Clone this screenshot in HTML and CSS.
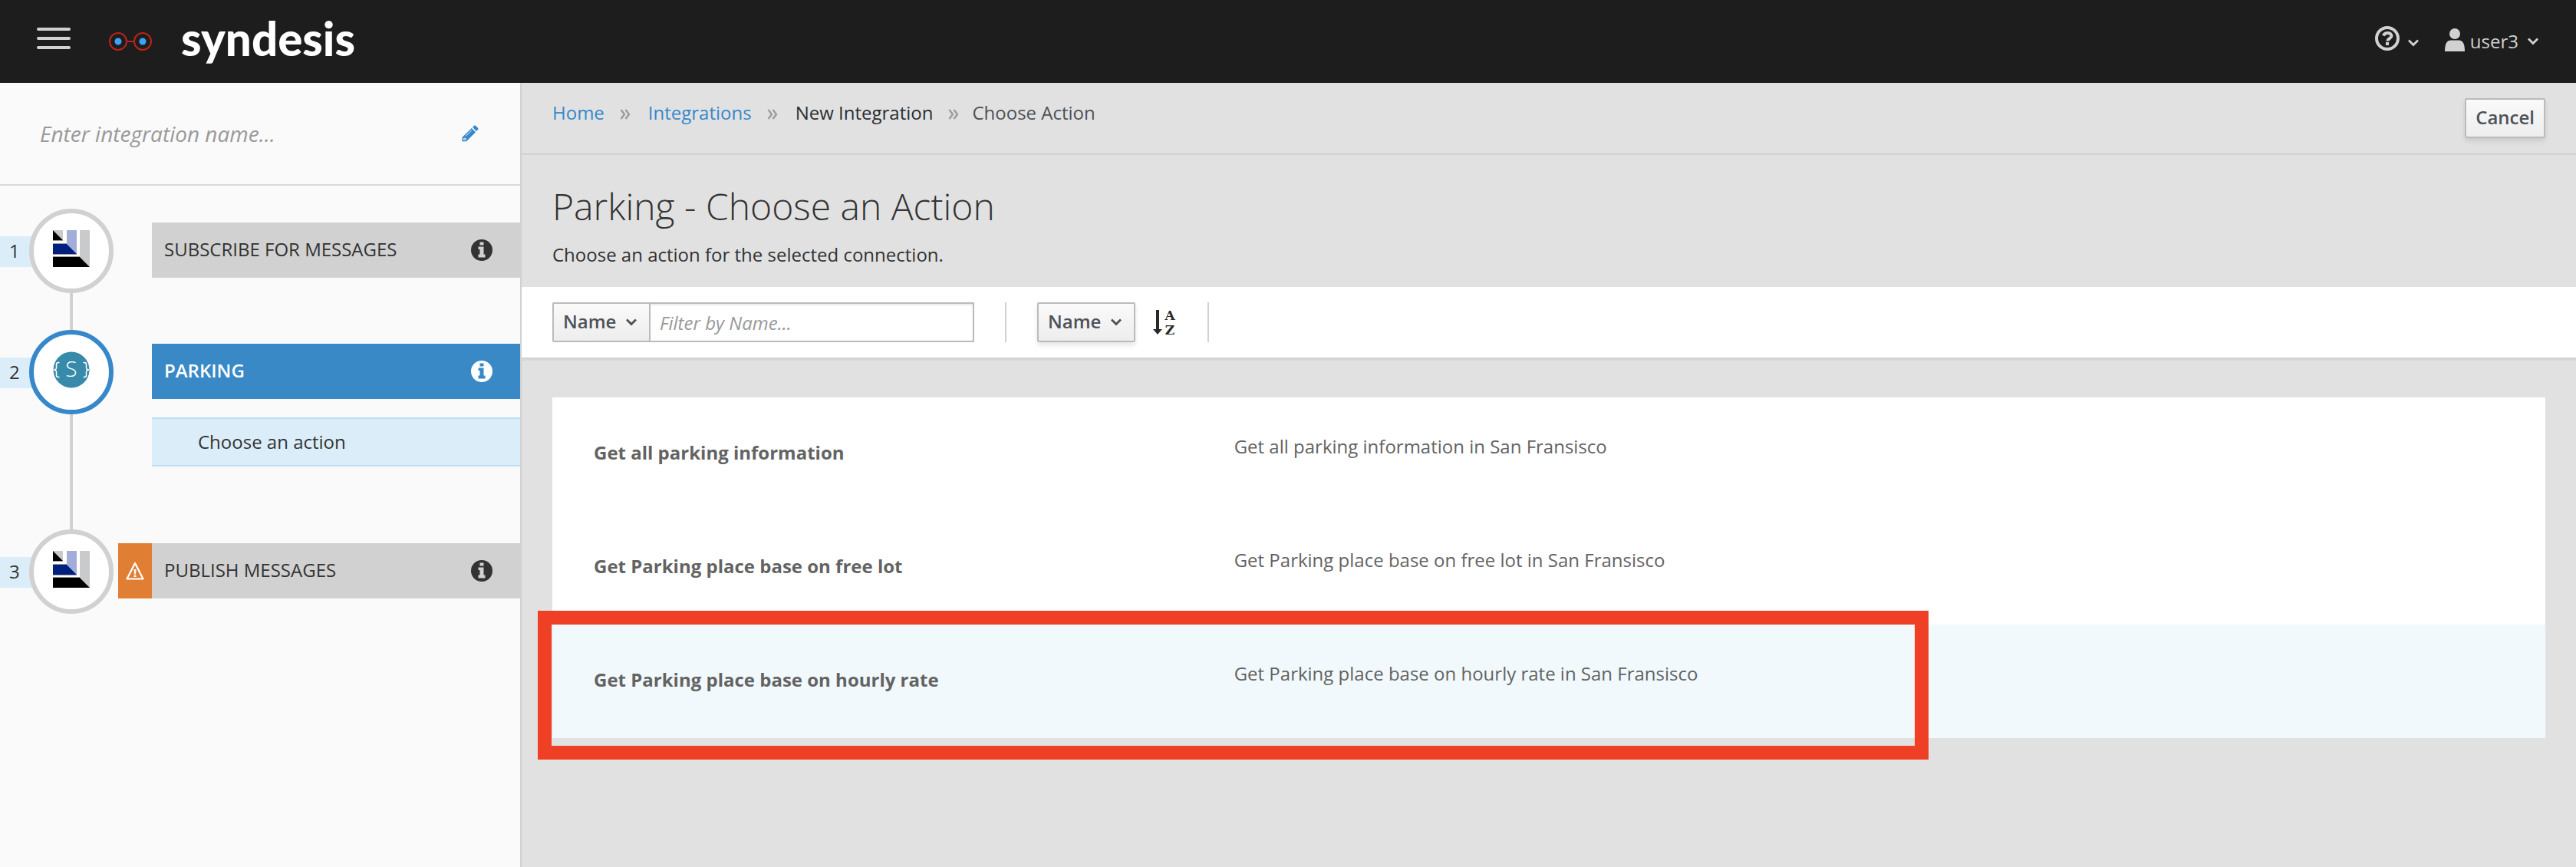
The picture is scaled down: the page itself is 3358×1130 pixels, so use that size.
FILE: index.html
```html
<!DOCTYPE html>
<html lang="en">
<head>
<meta charset="utf-8">
<meta name="viewport" content="width=device-width, initial-scale=1">
<title>Syndesis - New Integration</title>
<link rel="stylesheet" href="styles.css">
</head>
<body>
<svg class="sprite" aria-hidden="true">
  <symbol id="chevron" viewBox="0 0 14 10"><path d="M1 1.500 7 7.500 13 1.500" fill="none" stroke="currentColor" stroke-width="2.800"/></symbol>
  <symbol id="info" viewBox="0 0 28 28">
    <path fill="currentColor" fill-rule="evenodd" d="M14 0a14 14 0 1 1 0 28a14 14 0 0 1 0-28ZM11.500 3.500V7.500H16.500V3.500ZM9.500 9.500V13H11.500V19.500H9.500V23.500H18.500V19.500H16.500V9.500Z"/>
  </symbol>
  <symbol id="double-angle" viewBox="0 0 14 14"><path d="M1.500 1 6 7 1.500 13M7.500 1 12 7 7.500 13" fill="none" stroke="currentColor" stroke-width="2.400"/></symbol>
  <symbol id="amq" viewBox="0 0 48 48">
    <path fill="#c9cacc" d="M0 0H13V13ZM35 0H48V48L35 35Z"/>
    <path fill="#a3aed8" d="M18 0H31V31L18 18Z"/>
    <path fill="#000" d="M0 0 13 13H0ZM0 35H35L48 48H0Z"/>
    <path fill="#00207f" d="M0 18H18L31 31H0Z"/>
    <path fill="none" stroke="#999" d="M0 13.500H13M0 17.500H18M0 31.500H31M0 34.500H35"/>
  </symbol>
</svg>

<header class="topbar">
  <button class="icon-button menu-toggle" type="button" aria-label="Toggle navigation"><span></span><span></span><span></span></button>
  <a class="brand" href="#">
    <svg width="56" height="24" viewBox="0 0 56 24" aria-hidden="true">
      <g fill="none" stroke="#b92419" stroke-width="2"><circle cx="12" cy="12" r="11"/><circle cx="44" cy="12" r="11"/><path d="M23 12H33"/></g>
      <circle cx="12" cy="12" r="4.500" fill="#3fa2f2"/><circle cx="44" cy="12" r="4.500" fill="#3fa2f2"/>
    </svg>
    <span class="brand-name">syndesis</span>
  </a>
  <nav class="topbar-tools" aria-label="Utilities">
    <button class="icon-button help" type="button" aria-label="Help">
      <svg width="32" height="32" viewBox="0 0 32 32" aria-hidden="true">
        <circle cx="16" cy="16" r="14" fill="none" stroke="currentColor" stroke-width="4"/>
        <path d="M11 12.500C12 9.500 14 9 16.500 9C19.500 9 21.500 10.500 21.500 13C21.500 16 16.500 16 16.500 19.500" fill="none" stroke="currentColor" stroke-width="4"/>
        <path d="M14 21H18V25H14Z" fill="currentColor"/>
      </svg>
      <svg class="chevron" aria-hidden="true"><use href="#chevron"/></svg>
    </button>
    <button class="icon-button user" type="button">
      <svg width="26" height="32" viewBox="0 0 26 32" aria-hidden="true"><circle cx="13" cy="8" r="7" fill="currentColor"/><path d="M0 31C0 21 2.500 16.500 8 16.500H18C23.500 16.500 26 21 26 31Z" fill="currentColor"/></svg>
      <span>user3</span>
      <svg class="chevron" aria-hidden="true"><use href="#chevron"/></svg>
    </button>
  </nav>
</header>

<div class="layout">
  <aside class="sidebar">
    <div class="integration-name">
      <input type="text" aria-label="Integration name" placeholder="Enter integration name...">
      <button class="icon-button edit" type="button" aria-label="Edit name">
        <svg width="22" height="22" viewBox="0 0 22 22" aria-hidden="true">
          <path fill="currentColor" d="M14 2.800 16 .8Q17 0 18 .8L21 3.800Q22 5 21 6L19 8ZM12.800 4 18 9.200 6 21.200H.5V16Z"/>
          <path fill="none" stroke="#fafafa" stroke-width="1" d="M5 14.500 13 6.500M2.500 17.500V19.200H5.200L4.800 17.200Z"/>
        </svg>
      </button>
    </div>
    <ol class="steps">
      <li class="step">
        <span class="step-number">1</span>
        <div class="step-rail"><div class="step-icon"><svg width="48" height="48" aria-hidden="true"><use href="#amq"/></svg></div></div>
        <div class="step-body">
          <div class="step-bar"><span class="step-title">SUBSCRIBE FOR MESSAGES</span><button class="icon-button" type="button" aria-label="Step 1 details"><svg width="28" height="28" aria-hidden="true"><use href="#info"/></svg></button></div>
        </div>
      </li>
      <li class="step active">
        <span class="step-number">2</span>
        <div class="step-rail"><div class="step-icon">
          <svg width="48" height="48" viewBox="0 0 48 48" aria-hidden="true"><circle cx="24" cy="24" r="23.500" fill="#378aaa"/><text class="swagger" x="24" y="33" text-anchor="middle">S</text><path fill="none" stroke="#fff" stroke-width="1.500" d="M8.500 14.500H7Q4.500 14.500 4.500 17V21Q4.500 24 1 24Q4.500 24 4.500 27V31Q4.500 33.500 7 33.500H8.500M39.500 14.500H41Q43.500 14.500 43.500 17V21Q43.500 24 47 24Q43.500 24 43.500 27V31Q43.500 33.500 41 33.500H39.500"/></svg>
        </div></div>
        <div class="step-body">
          <div class="step-bar"><span class="step-title">PARKING</span><button class="icon-button" type="button" aria-label="Step 2 details"><svg width="28" height="28" aria-hidden="true"><use href="#info"/></svg></button></div>
          <div class="substep">Choose an action</div>
        </div>
      </li>
      <li class="step invalid">
        <span class="step-number">3</span>
        <div class="step-rail"><div class="step-icon"><svg width="48" height="48" aria-hidden="true"><use href="#amq"/></svg></div></div>
        <div class="step-body">
          <span class="step-warning"><svg width="24" height="24" viewBox="0 0 24 24" aria-hidden="true"><path d="M12 2 22.500 22.500H1.500Z" fill="none" stroke="#fff" stroke-width="2.200" stroke-linejoin="round"/><path d="M10.500 10H13.500L13 16.500H11ZM10.500 17.500H13.500V20H10.500Z" fill="#fff"/></svg></span>
          <div class="step-bar"><span class="step-title">PUBLISH MESSAGES</span><button class="icon-button" type="button" aria-label="Step 3 details"><svg width="28" height="28" aria-hidden="true"><use href="#info"/></svg></button></div>
        </div>
      </li>
    </ol>
  </aside>

  <main class="main">
    <div class="page-bar">
      <nav aria-label="Breadcrumb">
        <ol class="breadcrumb">
          <li><a href="#">Home</a></li>
          <li><svg class="separator" aria-hidden="true"><use href="#double-angle"/></svg><a href="#">Integrations</a></li>
          <li><svg class="separator" aria-hidden="true"><use href="#double-angle"/></svg><span class="parent">New Integration</span></li>
          <li><svg class="separator" aria-hidden="true"><use href="#double-angle"/></svg><span>Choose Action</span></li>
        </ol>
      </nav>
      <button class="button" type="button">Cancel</button>
    </div>
    <div class="page-head">
      <h1>Parking - Choose an Action</h1>
      <p>Choose an action for the selected connection.</p>
    </div>
    <form class="toolbar">
      <div class="filter">
        <div class="select"><select aria-label="Filter field"><option>Name</option></select><svg class="chevron" aria-hidden="true"><use href="#chevron"/></svg></div>
        <input type="text" aria-label="Filter by Name" placeholder="Filter by Name...">
      </div>
      <div class="sort">
        <div class="select raised"><select aria-label="Sort field"><option>Name</option></select><svg class="chevron" aria-hidden="true"><use href="#chevron"/></svg></div>
        <button class="icon-button" type="button" aria-label="Sort ascending">
          <svg class="sort-icon" width="34" height="40" viewBox="0 0 34 40" aria-hidden="true"><path fill="currentColor" d="M5 4H9V29H13L7 36 1 29H5Z"/><text class="sort-letter" x="23" y="17" text-anchor="middle">A</text><text class="sort-letter" x="23" y="36" text-anchor="middle">Z</text></svg>
        </button>
      </div>
    </form>
    <ul class="actions">
      <li class="action"><strong>Get all parking information</strong><span>Get all parking information in San Fransisco</span></li>
      <li class="action"><strong>Get Parking place base on free lot</strong><span>Get Parking place base on free lot in San Fransisco</span></li>
      <li class="action selected"><strong>Get Parking place base on hourly rate</strong><span>Get Parking place base on hourly rate in San Fransisco</span></li>
    </ul>
  </main>
</div>
</body>
</html>
```

FILE: styles.css
```css
*,
*::before,
*::after {
  box-sizing: border-box;
}

body {
  margin: 0;
  min-height: 100vh;
  display: flex;
  flex-direction: column;
  background: #e1e1e1;
  color: #333;
  font: 24px/40px "Open Sans", "Noto Sans", sans-serif;
}

svg {
  display: block;
  flex: none;
}

ol,
ul,
h1,
p {
  margin: 0;
  padding: 0;
  list-style: none;
}

a {
  color: #3688cb;
  text-decoration: none;
}

button,
input,
select {
  font: inherit;
  color: inherit;
  margin: 0;
}

input::placeholder {
  color: #999;
  font-style: italic;
  opacity: 1;
}

.sprite {
  display: none;
}

.chevron {
  width: 14px;
  height: 10px;
}

.icon-button {
  display: flex;
  align-items: center;
  padding: 0;
  border: 0;
  background: none;
}

/* Top bar */
.topbar {
  display: flex;
  align-items: center;
  height: 108px;
  padding: 0 49px 0 48px;
  background: #1d1d1d;
  color: #d1d1d1;
}

.menu-toggle {
  flex-direction: column;
  gap: 8px;
  width: 44px;
  margin: 0 50px 8px 0;
}

.menu-toggle span {
  width: 44px;
  height: 4px;
  border-radius: 2px;
  background: #d1d1d1;
}

.brand {
  display: flex;
  align-items: center;
  gap: 38px;
}

.brand-name {
  color: #fff;
  font: 900 60px/60px Lato, sans-serif;
  padding-bottom: 8px;
}

.topbar-tools {
  display: flex;
  align-items: center;
  gap: 34px;
  margin-left: auto;
}

.help {
  gap: 11px;
  padding-bottom: 8px;
}

.help .chevron {
  margin-top: 12px;
}

.user svg:first-child {
  margin-bottom: 4px;
}

.user span {
  margin: 0 12px 0 7px;
}

/* Layout */
.layout {
  display: flex;
  flex: 1;
}

.sidebar {
  flex: none;
  width: 680px;
  border-right: 2px solid #d1d1d1;
  background: #fafafa;
}

.main {
  flex: 1;
  min-width: 0;
}

/* Sidebar */
.integration-name {
  display: flex;
  align-items: center;
  height: 134px;
  padding: 0 54px 0 52px;
  border-bottom: 2px solid #d9d9d9;
}

.integration-name input {
  flex: 1;
  min-width: 0;
  padding: 0;
  border: 0;
  background: none;
  font-size: 28px;
}

.edit {
  color: #3688cb;
}

.steps {
  padding-top: 30px;
}

.step {
  display: flex;
}

.step-number {
  width: 50px;
  height: 40px;
  margin: 36px -12px 0 0;
  padding-left: 12px;
  background: #daedf8;
  line-height: 38px;
}

.step-rail {
  position: relative;
  display: flex;
  flex-direction: column;
  align-items: center;
  width: 110px;
}

.step-rail::after {
  content: "";
  flex: 1;
  width: 4px;
  min-height: 48px;
  background: #d1d1d1;
}

.step:last-child .step-rail::after {
  display: none;
}

.step-icon {
  display: flex;
  align-items: center;
  justify-content: center;
  width: 110px;
  height: 110px;
  padding-bottom: 6px;
  border: 6px solid #d1d1d1;
  border-radius: 50%;
  background: #fff;
}

.active .step-icon {
  border-color: #3688cb;
}

.swagger {
  fill: #fff;
  font-size: 28px;
  font-weight: 300;
}

.step-body {
  flex: 1;
  padding: 18px 0 0 50px;
}

.invalid .step-body {
  display: flex;
  padding-left: 6px;
}

.step-warning {
  display: flex;
  align-items: center;
  justify-content: center;
  width: 44px;
  height: 72px;
  background: #e07f33;
}

.step-bar {
  display: flex;
  flex: 1;
  align-items: center;
  justify-content: space-between;
  height: 72px;
  padding: 0 36px 0 16px;
  background: #d1d1d1;
}

.step-title {
  padding-bottom: 2px;
}

.active .step-bar {
  background: #3989c7;
  color: #fff;
  font-weight: 600;
}

.substep {
  margin: 24px 0 82px;
  padding: 10px 60px;
  border: solid #bbdff2;
  border-width: 2px 0;
  background: #daedf8;
}

/* Page header */
.page-bar {
  display: flex;
  align-items: flex-start;
  justify-content: space-between;
  padding: 20px 40px;
  border-bottom: 2px solid #d1d1d1;
}

.breadcrumb {
  display: flex;
  gap: 20px;
  color: #4d5258;
}

.breadcrumb li {
  display: flex;
  align-items: center;
  gap: 23px;
  line-height: 38px;
}

.breadcrumb li:last-child {
  gap: 17px;
}

.breadcrumb .parent {
  color: #292e34;
}

.separator {
  width: 14px;
  height: 14px;
  margin-top: 4px;
  color: #9c9c9c;
}

.button,
.select select {
  height: 52px;
  border: 2px solid #bbb;
  border-radius: 2px;
  background: linear-gradient(#fafafa, #ededed);
  color: #4d5258;
  font-weight: 600;
}

.button {
  padding: 0 12px 2px;
  box-shadow: 0 4px 6px rgba(3, 3, 3, 0.1);
}

.page-head {
  padding: 40px 40px 22px;
}

.page-head h1 {
  margin-bottom: 16px;
  font-size: 48px;
  font-weight: 300;
  line-height: 54px;
}

/* Toolbar */
.toolbar {
  display: flex;
  padding: 20px 40px;
  border-bottom: 2px solid #d1d1d1;
  background: #fff;
  box-shadow: 0 2px 0 #d7d7d7;
}

.filter {
  display: flex;
  width: 550px;
}

.filter input {
  flex: 1;
  min-width: 0;
  height: 52px;
  margin-left: -2px;
  padding: 0 12px;
  border: 2px solid #bbb;
  background: #fff;
  box-shadow: inset 0 2px 2px rgba(3, 3, 3, 0.08);
}

.select {
  display: grid;
  align-items: center;
  width: 128px;
}

.select > * {
  grid-area: 1 / 1;
}

.select select {
  width: 100%;
  padding: 0 0 2px 12px;
  appearance: none;
}

.select .chevron {
  justify-self: end;
  margin-right: 18px;
  color: #4d5258;
  pointer-events: none;
}

.raised select {
  box-shadow: 0 4px 6px rgba(3, 3, 3, 0.1);
}

.sort {
  display: flex;
  gap: 22px;
  margin-left: 40px;
  padding: 0 38px 0 40px;
  border: solid #d1d1d1;
  border-width: 0 2px;
  color: #292929;
}

.sort-icon {
  overflow: visible;
}

.sort-letter {
  fill: currentColor;
  font: bold 17px "DejaVu Serif", serif;
}

/* Action list */
.actions {
  margin: 50px 40px 0;
}

.action {
  position: relative;
  display: grid;
  grid-template-columns: 1fr 2fr;
  height: 148px;
  padding: 44px 40px 0 54px;
  background: #fff;
  color: #636363;
}

.action strong {
  padding-top: 8px;
}

.action.selected {
  background: #f1f9fc;
}

/* Callout frame laid over the selected action */
.action.selected::after {
  content: "";
  position: absolute;
  top: -18px;
  bottom: -28px;
  left: -19px;
  width: 1813px;
  border: 18px solid #ef4026;
}
```
